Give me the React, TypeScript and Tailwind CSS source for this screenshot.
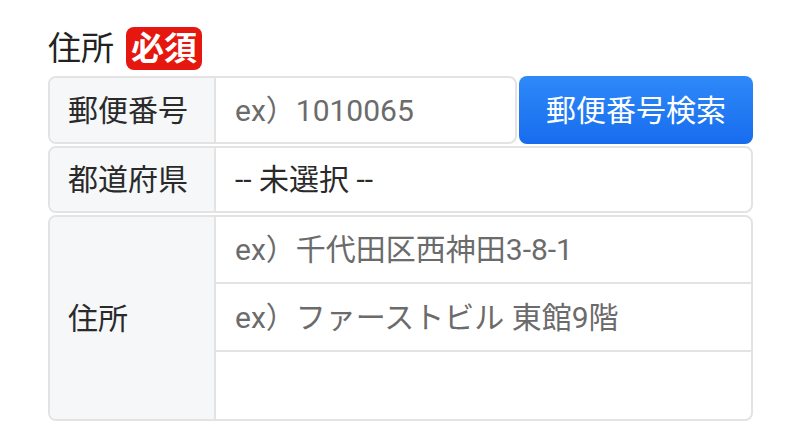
import React from "react";

const font = { fontFamily: '"Roboto", "Noto Sans CJK JP", sans-serif' };

export default function App() {
  return (
    <div className="w-[803px] h-[436px] bg-white pl-[48px] pr-[50px] pt-[27px]" style={font}>
      <div className="flex items-center h-[43px]">
        <span className="text-[33px] leading-none text-[#222]">住所</span>
        <span className="ml-[12px] h-[43px] px-[5px] rounded-[8px] bg-[#e5170f] text-white text-[33px] font-bold leading-none flex items-center">必須</span>
      </div>
      <div className="mt-[6px] flex flex-col gap-[2px]">
        <div className="flex gap-[2px] h-[68px]">
          <div className="flex flex-1 border-2 border-[#e3e3e3] rounded-[8px] overflow-hidden">
            <div className="w-[166px] shrink-0 bg-[#f6f7f9] border-r-2 border-[#e3e3e3] flex items-center pl-[18px] text-[30px] text-[#2a2a2a]">郵便番号</div>
            <div className="flex-1 flex items-center pl-[19px] text-[30px] text-[#6b6b6b]">ex）1010065</div>
          </div>
          <div className="w-[234px] rounded-[8px] bg-gradient-to-b from-[#2f89f8] to-[#176cee] text-white text-[30px] flex items-center justify-center">郵便番号検索</div>
        </div>
        <div className="flex h-[67px] border-2 border-[#e3e3e3] rounded-[8px] overflow-hidden">
          <div className="w-[166px] shrink-0 bg-[#f6f7f9] border-r-2 border-[#e3e3e3] flex items-center pl-[18px] text-[30px] text-[#2a2a2a]">都道府県</div>
          <div className="flex-1 flex items-center pl-[19px] text-[30px] text-[#2a2a2a]">-- 未選択 --</div>
        </div>
        <div className="flex h-[206px] border-2 border-[#e3e3e3] rounded-[8px] overflow-hidden">
          <div className="w-[166px] shrink-0 bg-[#f6f7f9] border-r-2 border-[#e3e3e3] flex items-center pl-[18px] text-[30px] text-[#2a2a2a]">住所</div>
          <div className="flex-1 flex flex-col">
            <div className="h-[67px] flex items-center pl-[19px] text-[30px] text-[#6b6b6b] border-b-2 border-[#e3e3e3]">ex）千代田区西神田3-8-1</div>
            <div className="h-[68px] flex items-center pl-[19px] text-[30px] text-[#6b6b6b] border-b-2 border-[#e3e3e3]">ex）ファーストビル 東館9階</div>
            <div className="flex-1"></div>
          </div>
        </div>
      </div>
    </div>
  );
}
